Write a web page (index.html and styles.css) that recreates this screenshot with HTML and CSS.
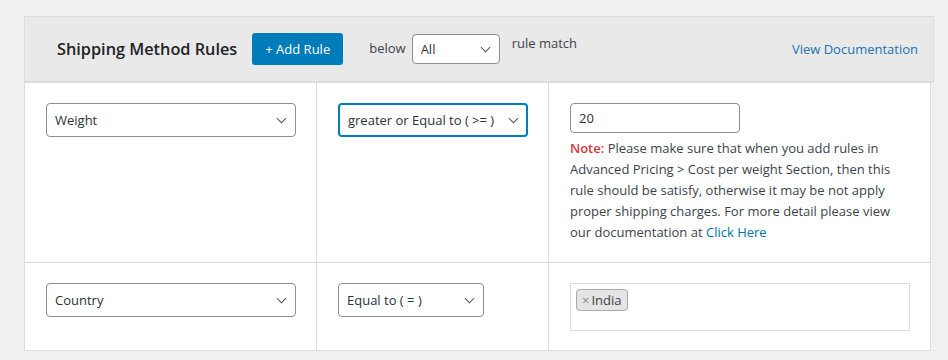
FILE: index.html
```html
<!DOCTYPE html>
<html lang="en">
<head>
    <meta charset="UTF-8" />
    <meta name="viewport" content="width=device-width, initial-scale=1" />
    <title>Shipping Method Rules</title>
    <link rel="stylesheet" href="styles.css">
</head>
<body>

<div class="rules-box">

    <div class="rules-head">
        <h2>Shipping Method Rules</h2>
        <button class="add-rule">+ Add Rule</button>
        <span class="below">below</span>
        <span class="select-wrap">
            <select class="match-select">
                <option>All</option>
                <option>Any</option>
            </select>
        </span>
        <span class="rule-match">rule match</span>
        <a class="doc-link" href="#">View Documentation</a>
    </div>

    <table class="rules-table">
        <colgroup>
            <col class="col-field">
            <col class="col-cond">
            <col class="col-value">
        </colgroup>
        <tr>
            <td>
                <span class="select-wrap full">
                    <select>
                        <option>Weight</option>
                    </select>
                </span>
            </td>
            <td>
                <span class="select-wrap">
                    <select class="focused">
                        <option>greater or Equal to ( &gt;= )</option>
                    </select>
                </span>
            </td>
            <td>
                <input class="value-input" type="text" value="20" />
                <p class="note">
                    <strong>Note:</strong> Please make sure that when you add rules in
                    Advanced Pricing &gt; Cost per weight Section, then this
                    rule should be satisfy, otherwise it may be not apply
                    proper shipping charges. For more detail please view
                    our documentation at <a href="#">Click Here</a>
                </p>
            </td>
        </tr>
        <tr>
            <td>
                <span class="select-wrap full">
                    <select>
                        <option>Country</option>
                    </select>
                </span>
            </td>
            <td>
                <span class="select-wrap">
                    <select class="equal">
                        <option>Equal to ( = )</option>
                    </select>
                </span>
            </td>
            <td>
                <div class="tag-box">
                    <span class="tag"><span class="tag-x">&times;</span>India</span>
                </div>
            </td>
        </tr>
    </table>

</div>

</body>
</html>
```

FILE: styles.css
```css
* {
    box-sizing: border-box;
    margin: 0;
    padding: 0;
}
body {
    font-family: 'Open Sans', 'Noto Sans', sans-serif;
    font-size: 13px;
    color: #3c434a;
    background: #f0f0f1;
    padding: 16px 14px 0 24px;
}
.rules-box {
    width: 910px;
}

/* header bar */
.rules-head {
    display: flex;
    align-items: center;
    height: 67px;
    padding: 0 15px 0 32px;
    background: #e9e9e9;
    border: 1px solid #dcdcde;
    border-bottom: 2px solid #dcdcde;
}
.rules-head h2 {
    font-size: 16.3px;
    font-weight: 600;
    color: #1d2327;
    margin-right: 15px;
}
button.add-rule {
    background: #007cba;
    color: #fff;
    border: none;
    border-radius: 3px;
    height: 32px;
    padding: 0 13px;
    font-family: inherit;
    font-size: 13px;
    cursor: pointer;
    margin-right: 26px;
}
.below {
    margin-right: 6px;
    margin-top: -3px;
}
.match-select {
    width: 88px;
    height: 30px;
}
.rule-match {
    align-self: flex-start;
    margin: 17px 0 0 12px;
}
.doc-link {
    margin-left: auto;
    color: #2271b1;
    text-decoration: none;
}

/* selects */
.select-wrap {
    position: relative;
    display: inline-block;
}
.select-wrap.full {
    display: block;
    width: 250px;
}
.select-wrap::after {
    content: "";
    position: absolute;
    right: 11px;
    top: 50%;
    width: 6px;
    height: 6px;
    margin-top: -5px;
    border-right: 1.6px solid #50575e;
    border-bottom: 1.6px solid #50575e;
    transform: rotate(45deg);
    pointer-events: none;
}
select {
    appearance: none;
    -webkit-appearance: none;
    display: block;
    width: 100%;
    height: 34px;
    padding: 0 30px 0 8px;
    font-family: inherit;
    font-size: 13px;
    color: #2c3338;
    background: #fff;
    border: 1px solid #8c8f94;
    border-radius: 4px;
}
select.focused {
    width: 190px;
    border: 2px solid #007cba;
    padding-left: 8px;
}
select.equal {
    width: 146px;
}

/* table */
.rules-table {
    width: 906px;
    table-layout: fixed;
    border-collapse: collapse;
    background: #fff;
}
.rules-table col.col-field {
    width: 292px;
}
.rules-table col.col-cond {
    width: 232px;
}
.rules-table col.col-value {
    width: 382px;
}
.rules-table td {
    border: 1px solid #dcdcde;
    border-top: none;
    padding: 20px 20px 19px 21px;
    vertical-align: top;
}
.value-input {
    display: block;
    width: 170px;
    height: 30px;
    padding: 0 8px;
    font-family: inherit;
    font-size: 13px;
    color: #2c3338;
    border: 1px solid #8c8f94;
    border-radius: 4px;
}
.note {
    margin-top: 5px;
    line-height: 21px;
}
.note strong {
    color: #d63638;
    font-weight: 600;
}
.note a {
    color: #0073aa;
    text-decoration: none;
}
.tag-box {
    width: 340px;
    height: 48px;
    border: 1px solid #dcdcde;
    padding: 5px;
}
.tag {
    display: inline-block;
    height: 22px;
    line-height: 20px;
    padding: 0 5px;
    background: #e4e4e4;
    border: 1px solid #aaa;
    border-radius: 4px;
    font-size: 13px;
    color: #3c434a;
}
.tag-x {
    color: #888;
    margin-right: 2px;
}
```
